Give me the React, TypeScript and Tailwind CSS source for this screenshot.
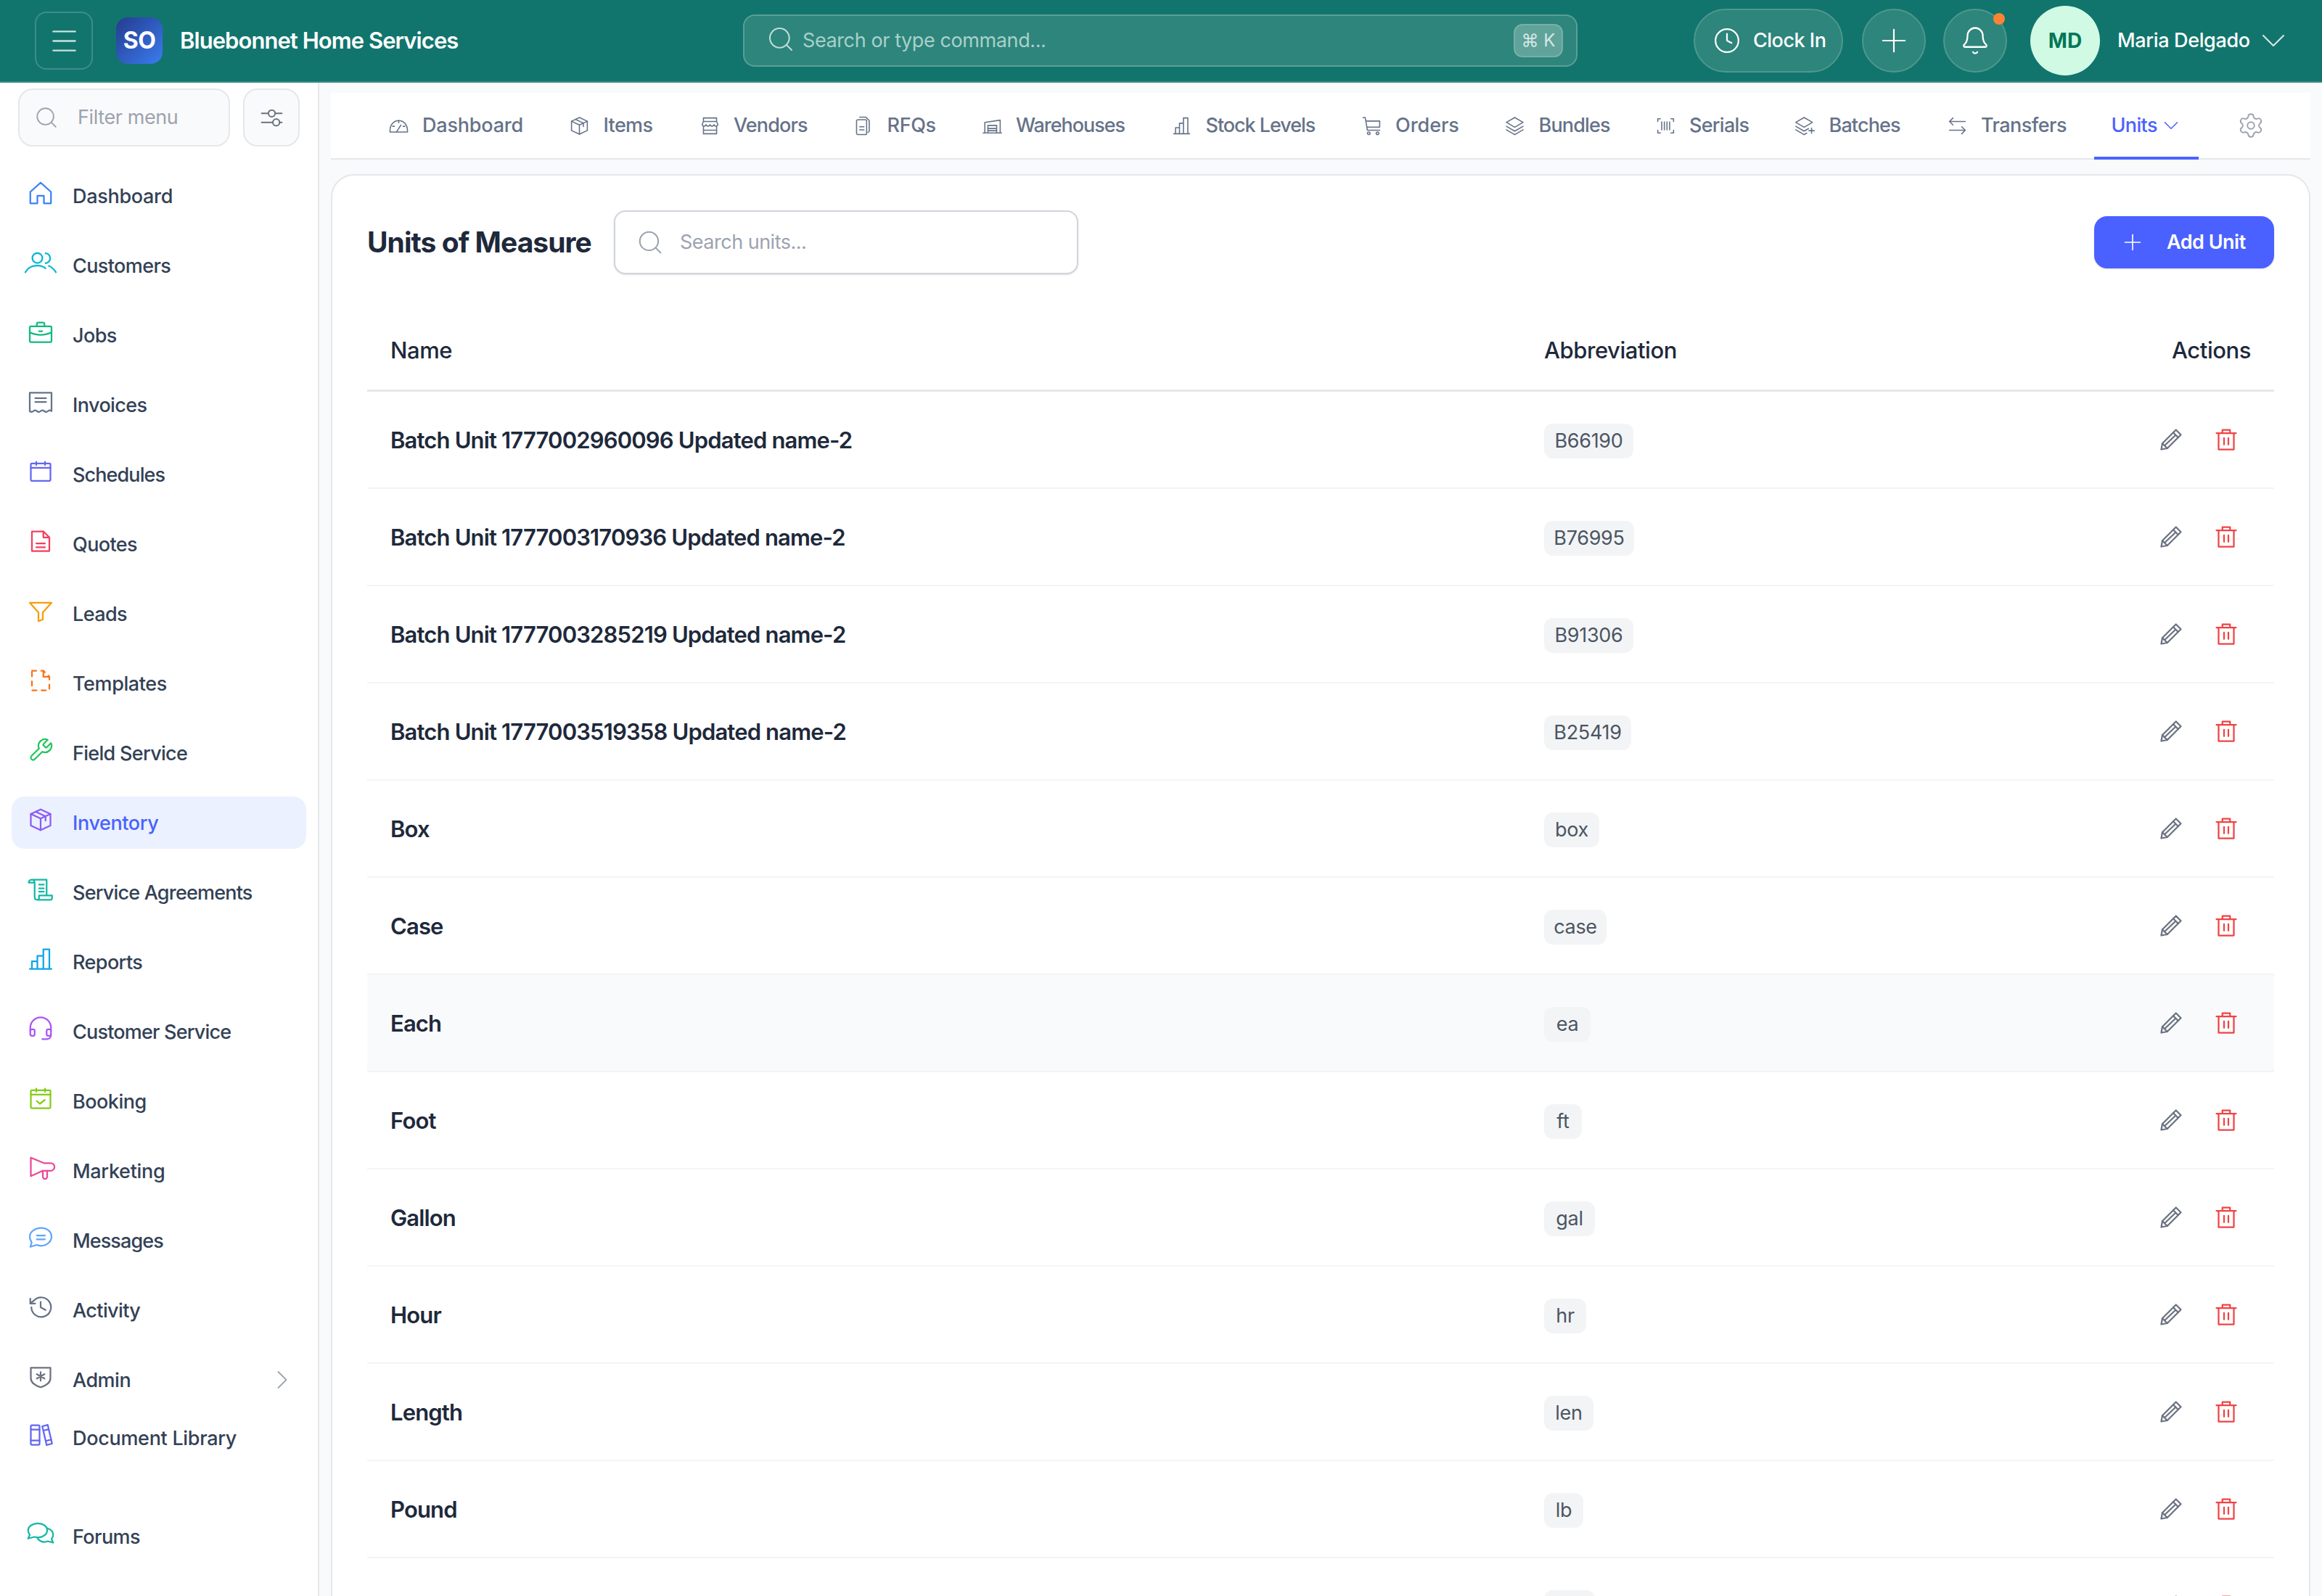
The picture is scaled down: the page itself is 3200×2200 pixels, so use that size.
import React from 'react';
import { Bell, ChevronDown, ChevronRight, Clock, Menu, Plus, Search, Settings } from 'lucide-react';

type IconProps = { className?: string; sw?: number; children: React.ReactNode };

const Ico = ({ className, sw = 1.5, children }: IconProps) => (
  <svg viewBox="0 0 24 24" fill="none" stroke="currentColor" strokeWidth={sw} strokeLinecap="round" strokeLinejoin="round" className={`overflow-visible shrink-0 ${className ?? ''}`}>
    {children}
  </svg>
);

const boxPaths = (
  <>
    <path d="M12 2.500l9 4.200v10.600l-9 4.200-9-4.200V6.700z" />
    <path d="M3 6.700l9 4.200 9-4.200M12 10.900v10.600M7.500 4.600l9 4.200v4" />
  </>
);

const navItems = [
  { label: 'Dashboard', t: 'tracking-[-0.3px]', color: 'text-[#3b82f6]', icon: <path d="M12 2.500L2.500 11v10.500h6.500V14.500h6v7h6.500V11z" /> },
  { label: 'Customers', t: 'tracking-[-0.6px]', color: 'text-[#06b6d4]', icon: <><path d="M9 3.200a4.600 4.600 0 1 0 0 9.200 4.600 4.600 0 0 0 0-9.200z" /><path d="M-2 20.800c2.200-4 6-6 11-6 2.800 0 5.500.8 7.500 2.400" /><path d="M16.500 3.400c2.500.3 4.200 2.200 4.200 4.600s-1.700 4.200-4.200 4.600" /><path d="M19.500 15c2.800.9 4.500 2.800 6.500 5.800" /></> },
  { label: 'Jobs', t: 'tracking-[-0.6px]', color: 'text-[#10b981]', icon: <><rect x="2" y="6.500" width="20" height="14.500" rx="1.200" /><path d="M8.500 6.500V4.500A1.500 1.500 0 0 1 10 3h4a1.500 1.500 0 0 1 1.500 1.500v2" /><path d="M2 12c3 1.600 6.400 2.400 10 2.400s7-.8 10-2.400" /><path d="M10.500 11h3" /></> },
  { label: 'Invoices', t: 'tracking-[-0.6px]', color: 'text-[#64748b]', icon: <><path d="M2 20.500V3.500h20v17q-1.700-1.400-3.300 0t-3.400 0-3.300 0-3.400 0-3.300 0-3.300 0z" /><path d="M7 8.500h10M7 12h10" /></> },
  { label: 'Schedules', t: 'tracking-[-0.9px]', color: 'text-[#6366f1]', icon: <><rect x="3" y="4.500" width="18" height="16" rx="0.800" /><path d="M3 8.500h18M8 3v3M16 3v3" /></> },
  { label: 'Quotes', t: 'tracking-[-0.6px]', color: 'text-[#f43f5e]', icon: <><path d="M4 3h10.500L20 8.500V21H4z" /><path d="M14.500 3v5.500H20M8 14h8M8 17.500h8" /></> },
  { label: 'Leads', t: 'tracking-[-0.6px]', color: 'text-[#f59e0b]', icon: <path d="M2 4.500h20l-8 9v6.500l-4 1.500v-8z" /> },
  { label: 'Templates', t: 'tracking-[-0.4px]', color: 'text-[#f97316]', icon: <><path d="M4 3h10.500L20 8.500V21H4z" strokeDasharray="4 4.500" /><path d="M14.500 3v5.500H20" /></> },
  { label: 'Field Service', t: 'tracking-[-0.7px]', color: 'text-[#22c55e]', icon: <path d="M14.700 6.300a1 1 0 0 0 0 1.400l1.600 1.600a1 1 0 0 0 1.400 0l3.770-3.770a6 6 0 0 1-7.940 7.940l-6.910 6.910a2.120 2.120 0 0 1-3-3l6.910-6.910a6 6 0 0 1 7.940-7.940l-3.760 3.760z" /> },
  { label: 'Inventory', t: 'tracking-[-0.4px]', color: 'text-[#8b5cf6]', active: true, icon: boxPaths },
  { label: 'Service Agreements', t: 'tracking-[-0.8px]', color: 'text-[#14b8a6]', icon: <><path d="M4 3c-1.500 0-3 1-3 2.800h4.500M4 3h13.500v14.500M4 3c1.200 0 2.500 1 2.500 2.800V19c0 1.500 1 2.500 2.500 2.500h12c.8 0 1.500-.6 1.500-1.500v-2.500H10.500V20c0 .9-.7 1.500-1.500 1.500" /><path d="M10.500 7.500h4.500M10.500 11h4.500M10.500 14h4.500" /></> },
  { label: 'Reports', t: 'tracking-[-0.6px]', color: 'text-[#0ea5e9]', icon: <path d="M2 21h20M4 21v-7h5v7M9 21V9h5.500v12M14.500 21V3H20v18" /> },
  { label: 'Customer Service', t: 'tracking-[-0.8px]', color: 'text-[#a855f7]', icon: <><path d="M2.500 14v-3a9.500 9.500 0 0 1 19 0v3" /><rect x="2.500" y="12.500" width="4" height="6" rx="1.500" /><rect x="17.500" y="12.500" width="4" height="6" rx="1.500" /><path d="M21.500 18c0 2-1.500 3.500-3.500 3.500h-4.500" /></> },
  { label: 'Booking', t: 'tracking-[-0.5px]', color: 'text-[#84cc16]', icon: <><rect x="3" y="4.500" width="18" height="16.500" rx="0.800" /><path d="M3 8.500h18M8 3v3M16 3v3M8.500 14.500l2.800 2.500 4.500-3.500" /></> },
  { label: 'Marketing', t: 'tracking-[-0.3px]', color: 'text-[#ec4899]', icon: <><path d="M3 2.500v17l11-5h7a3.500 3.500 0 0 0 .5-7H15z" /><path d="M14 14.500V20a2 2 0 0 0 4 0v-5.500" /></> },
  { label: 'Messages', t: 'tracking-[-0.9px]', color: 'text-[#60a5fa]', icon: <><path d="M12.500 3c5 0 9.500 3.300 9.500 8s-4.500 8.500-9.500 8.500c-1.500 0-3-.3-4.300-.8L2.500 20.500l1.300-4C2.700 15 2 13.200 2 11c0-4.700 5.500-8 10.500-8z" /><path d="M8.500 10h7.500M8.500 13.500h7.500" /></> },
  { label: 'Activity', t: 'tracking-[-0.6px]', color: 'text-[#64748b]', icon: <><path d="M3.500 12a9 9 0 1 0 2.600-6.400L2.500 8.500" /><path d="M2.500 4v4.500H7M12 7v5l4.500 2.500" /></> },
];

const filesIcon = <><rect x="4.500" y="5" width="11.500" height="17" rx="1.500" /><path d="M8 2h7l4 4v11.500c0 1-.6 1.800-1.500 2M8 13h5M8 16.500h5" /></>;

const tabs = [
  { label: 'Dashboard', w: 'w-[139px] tracking-[-0.2px]', icon: <><path d="M2 18c0-7 4-12 10-12s10 5 10 12v1H2z" /><path d="M12 6v2.500M5 12.500h2M19 12.500h-2M9.500 19l5-8" /></> },
  { label: 'Items', w: 'w-[69px] tracking-[-0.65px]', icon: boxPaths },
  { label: 'Vendors', w: 'w-[101px] tracking-[-0.85px]', icon: <><path d="M4.500 3h15v4h-15zM4.500 7L3 10.500a2.300 2.300 0 0 0 4.500 0 2.300 2.300 0 0 0 4.500 0 2.300 2.300 0 0 0 4.500 0 2.300 2.300 0 0 0 4.500 0L19.500 7" /><path d="M4.500 13v8h15v-8M4.500 17h15" /></> },
  { label: 'RFQs', w: 'w-[67px] tracking-[-0.35px]', icon: filesIcon },
  { label: 'Warehouses', w: 'w-[151px] tracking-[-1.05px]', icon: <path d="M1.500 20h21M3.500 20V8L21 5.500V20M7 20v-8.500h10V20M7 15h10M7 17.500h10" /> },
  { label: 'Stock Levels', w: 'w-[151px] tracking-[-1.05px]', icon: <path d="M3 21h18M5 21v-7h4.500v7M9.500 21V9H14v12M14 21V3h5v18" /> },
  { label: 'Orders', w: 'w-[87px] tracking-[-0.05px]', icon: <><path d="M2 2.500h2.500L7 17h14M5 6.500h16v7H6.500" /><circle cx="8.500" cy="20.500" r="1.500" /><circle cx="18.500" cy="20.500" r="1.500" /></> },
  { label: 'Bundles', w: 'w-[97px] tracking-[-0.85px]', icon: <path d="M12 2.500l9.500 5.500-9.500 5.500L2.500 8zM2.500 12.500l9.500 5.500 9.500-5.500M2.500 16.500l9.500 5.500 9.500-5.500" /> },
  { label: 'Serials', w: 'w-[82px] tracking-[-0.75px]', icon: <path d="M6 4H3v3M18 4h3v3M6 20H3v-3M18 20h3v-3M7.500 7.500v9M10.500 7.500v9M13.500 7.500v9M16.500 7.500v9" /> },
  { label: 'Batches', w: 'w-[99px] tracking-[-0.85px]', icon: <path d="M11 2.500l9.500 5.500-9.500 5.500L1.500 8zM1.500 12.500l9.500 5.500 5-2.900M1.500 16.500l9.500 5.500 3-1.700M19.500 14.500v6M16.500 17.500h6" /> },
  { label: 'Transfers', w: 'w-[118px] tracking-[-0.55px]', icon: <path d="M21 7H3M7 3L3 7l4 4M3 17h18M17 13l4 4-4 4" /> },
];

// last row only shows the top of its badge and icons above the fold
const rows = [
  { name: 'Batch Unit 1777002960096 Updated name-2', abbr: 'B66190', w: 'w-[123px]' },
  { name: 'Batch Unit 1777003170936 Updated name-2', abbr: 'B76995', w: 'w-[124px]' },
  { name: 'Batch Unit 1777003285219 Updated name-2', abbr: 'B91306', w: 'w-[123px]' },
  { name: 'Batch Unit 1777003519358 Updated name-2', abbr: 'B25419', w: 'w-[120px]' },
  { name: 'Box', abbr: 'box', w: 'w-[76px]' },
  { name: 'Case', abbr: 'case', w: 'w-[86px]' },
  { name: 'Each', abbr: 'ea', w: 'w-[64px]', hover: true },
  { name: 'Foot', abbr: 'ft', w: 'w-[52px]' },
  { name: 'Gallon', abbr: 'gal', w: 'w-[70px]' },
  { name: 'Hour', abbr: 'hr', w: 'w-[58px]' },
  { name: 'Length', abbr: 'len', w: 'w-[68px]' },
  { name: 'Pound', abbr: 'lb', w: 'w-[54px]' },
  { name: '', abbr: '', w: 'w-[70px]' },
];

const labelClass = 'ml-[26px] translate-y-px text-[27px] font-[550]';

const NavRow = ({ item }: { item: (typeof navItems)[number] }) => (
  <div className={`flex h-[72px] items-center rounded-[18px] pl-[22px] ${item.active ? 'bg-[#ebf1fe] text-[#4a61ff]' : 'text-[#334155]'}`}>
    <Ico className={`h-9 w-9 -translate-y-1 ${item.color}`}>{item.icon}</Ico>
    <span className={`${labelClass} ${item.t}`}>{item.label}</span>
  </div>
);

export default function App() {
  return (
    <div className="flex h-[2200px] w-[3200px] flex-col overflow-hidden bg-[#f9fafb] font-['Inter',sans-serif]">
      <header className="flex h-[114px] shrink-0 items-center border-b-2 border-[#3b8b83] bg-[#11756d]">
        <button className="ml-12 flex h-20 w-20 items-center justify-center rounded-2xl border-2 border-[#3f8d85] text-[#c9e2de]">
          <Menu className="h-[45px] w-[45px]" strokeWidth={1.3} />
        </button>
        <div className="ml-8 flex h-16 w-16 items-center justify-center rounded-2xl bg-linear-to-br from-[#243c8f] to-[#3b7cf0] text-[32px] font-bold tracking-[-0.5px] text-white">SO</div>
        <div className="ml-6 w-[776px] text-[31px] font-semibold tracking-[-0.95px] whitespace-nowrap text-white">Bluebonnet Home Services</div>
        <div className="flex h-[72px] w-[1150px] items-center rounded-2xl border-2 border-[#5a9f97] bg-[#2d857b] pr-[18px] pl-[30px]">
          <Search className="h-10 w-10 -translate-y-0.5 text-[#c0dbd7]" strokeWidth={1.25} />
          <span className="ml-[10px] text-[27px] tracking-[-0.4px] text-[#a9d0cb]">Search or type command...</span>
          <span className="ml-auto flex h-[46px] w-[68px] items-center justify-center rounded-xl border-2 border-[#76b0a9] bg-[#5fa39b] text-[24px] text-[#d5e8e5]">⌘ K</span>
        </div>
        <button className="ml-[160px] flex h-[88px] w-[206px] items-center rounded-full border-2 border-[#4e988f] bg-[#2d857b] pl-[25px] text-white">
          <Clock className="h-[38px] w-[38px]" strokeWidth={1.4} />
          <span className="ml-[17px] text-[27px] font-[550] tracking-[-0.5px]">Clock In</span>
        </button>
        <button className="ml-[26px] flex h-[88px] w-[88px] items-center justify-center rounded-full border-2 border-[#4e988f] bg-[#2d857b] text-white">
          <Plus className="h-[52px] w-[52px]" strokeWidth={1} />
        </button>
        <button className="relative ml-6 flex h-[88px] w-[88px] items-center justify-center rounded-full border-2 border-[#4e988f] bg-[#2d857b] text-white">
          <Bell className="h-[42px] w-[42px]" strokeWidth={1.3} />
          <span className="absolute top-1 right-[1px] h-4 w-4 rounded-full bg-[#fb8332]" />
        </button>
        <div className="ml-8 flex h-24 w-24 items-center justify-center rounded-full bg-[#d1fae5] text-[28px] font-bold text-[#047857]">MD</div>
        <span className="ml-[24px] w-[185px] text-[27px] font-[550] tracking-[-0.35px] whitespace-nowrap text-white">Maria Delgado</span>
        <ChevronDown className="ml-[2px] h-14 w-14 text-[#d5e8e5]" strokeWidth={0.9} />
      </header>

      <div className="flex min-h-0 flex-1">
        <aside className="w-[440px] shrink-0 border-r-2 border-[#e5e7eb] bg-white">
          <div className="mt-2 ml-[25px] flex gap-[18px]">
            <div className="flex h-20 w-[292px] items-center rounded-[20px] border-2 border-[#e5e7eb] bg-[#f9fafb] pl-[20px]">
              <Search className="h-[34px] w-[34px] text-[#9ca3af]" strokeWidth={1.3} />
              <span className="ml-[26px] text-[27px] tracking-[-0.4px] text-[#9ca3af]">Filter menu</span>
            </div>
            <div className="flex h-20 w-[78px] items-center justify-center rounded-[20px] border-2 border-[#e5e7eb] bg-[#f9fafb] text-[#6b7280]">
              <Ico className="h-[37px] w-[37px]" sw={1.3}>
                <path d="M3 8h6M15 8h6M3 16h10M19 16h2" />
                <circle cx="12" cy="8" r="3" />
                <circle cx="16" cy="16" r="3" />
              </Ico>
            </div>
          </div>
          <nav className="mt-8 flex w-[422px] flex-col gap-6 pl-4">
            {navItems.map(item => (
              <NavRow key={item.label} item={item} />
            ))}
          </nav>
          <div className="mt-6 w-[422px] pl-4">
            <div className="flex h-[72px] items-center pl-[22px] text-[#334155]">
              <Ico className="h-9 w-9 -translate-y-1 text-[#6b7280]"><path d="M3 3.500h18V13c0 4-4 7-9 8.500-5-1.500-9-4.500-9-8.500z" /><path d="M12 7.500v8M8.500 9.500l7 4M15.500 9.500l-7 4" /></Ico>
              <span className={`${labelClass} tracking-[-0.5px]`}>Admin</span>
              <ChevronRight className="mr-[11px] ml-auto h-11 w-11 text-[#9ca3af]" strokeWidth={1} />
            </div>
            <div className="mt-2 flex h-[72px] items-center pl-[22px] text-[#334155]">
              <Ico className="h-9 w-9 -translate-y-1 text-[#6366f1]"><rect x="3" y="3" width="8" height="18" rx="1" /><path d="M3 7h8M3 17h8M13.500 4l5-1.300L22.500 20l-5 1.300zM14.500 8l5-1.300M16.800 17.500l5-1.300" /></Ico>
              <span className={`${labelClass} tracking-[-0.3px]`}>Document Library</span>
            </div>
            <div className="mt-16 flex h-[72px] items-center pl-[22px] text-[#334155]">
              <Ico className="h-9 w-9 -translate-y-1 text-[#14b8a6]"><path d="M9.500 2.500c4.500 0 8.500 2.700 8.500 6.500s-4 6.500-8.500 6.500c-1 0-2.200-.2-3.200-.5L.500 16.500l1.500-3.500C1 12 .500 10.500.500 9c0-3.800 4.500-6.500 9-6.500z" /><path d="M18 7c3 1 5.500 3 5.500 6 0 1.500-.5 2.800-1.500 3.800l1.500 3.500-5-1.300c-3.500 1.500-7.500.5-9.500-3" /></Ico>
              <span className={`${labelClass} tracking-[-0.6px]`}>Forums</span>
            </div>
          </div>
        </aside>

        <main className="min-w-0 flex-1 px-4 pt-[14px]">
          <div className="flex h-[92px] items-stretch border-b-2 border-[#e5e7eb] bg-white pl-[53px]">
            {tabs.map(t => (
              <div key={t.label} className="mr-[13.5px] flex items-center px-6 text-[#667289]">
                <Ico className="mr-[18.5px] ml-[1.5px] h-[29px] w-[29px]" sw={1.3}>{t.icon}</Ico>
                <span className={`${t.w} text-[27px] font-[550] whitespace-nowrap`}>{t.label}</span>
              </div>
            ))}
            <div className="relative flex w-[144px] items-center px-6 text-[#4a61ff]">
              <span className="w-[65px] text-[27px] font-[550] tracking-[-0.65px]">Units</span>
              <ChevronDown className="ml-[2px] h-[34px] w-[34px] shrink-0" strokeWidth={1.1} />
              <span className="absolute inset-x-0 -bottom-0.5 h-1 bg-[#4a61ff]" />
            </div>
            <div className="ml-[53px] flex items-center text-[#9ca3af]">
              <Settings className="h-[38px] w-[38px]" strokeWidth={1.2} />
            </div>
          </div>

          <section className="mt-5 h-[2100px] rounded-t-[32px] border-2 border-[#e5e7eb] bg-white p-12">
            <div className="flex items-center">
              <h1 className="w-[307px] text-[39px] font-bold tracking-[-0.95px] whitespace-nowrap text-[#1e293b]">Units of Measure</h1>
              <div className="ml-[33px] flex h-[88px] w-[640px] items-center rounded-2xl border-2 border-[#d1d5db] bg-white pl-[29px] shadow-sm">
                <Search className="h-[38px] w-[38px] text-[#9ca3af]" strokeWidth={1.3} />
                <span className="ml-[22px] text-[27px] tracking-[-0.5px] text-[#9ca3af]">Search units...</span>
              </div>
              <button className="ml-auto flex h-[72px] w-[248px] items-center rounded-[18px] bg-[#4a61ff] pl-[35px] text-white shadow-sm">
                <Plus className="h-9 w-9" strokeWidth={1.1} />
                <span className="ml-[29px] text-[27px] font-semibold tracking-[-0.5px]">Add Unit</span>
              </button>
            </div>

            <div className="mt-12 flex h-[114px] items-center border-b-[3px] border-[#e5e7eb] pt-1 pl-8 text-[31px] font-[550] tracking-[-0.45px] text-[#1e293b]">
              <span className="w-[1590px]">Name</span>
              <span>Abbreviation</span>
              <span className="mr-8 ml-auto">Actions</span>
            </div>
            {rows.map((r, i) => (
              <div key={i} className={`flex h-[134px] items-center border-b-2 border-[#f3f4f6] pl-8 ${r.hover ? 'bg-[#f9fafb]' : ''}`}>
                <span className="w-[1590px] translate-y-px text-[31px] font-semibold tracking-[-0.85px] text-[#1e293b]">{r.name}</span>
                <span className={`flex h-12 ${r.w} translate-y-0.5 items-center justify-center rounded-xl bg-[#f3f4f6] text-[27px] tracking-[-0.3px] text-[#4b5563]`}>{r.abbr}</span>
                <div className="mr-12 ml-auto flex gap-10">
                  <Ico className="h-9 w-9 text-[#6b7280]">
                    <path d="M16.500 3l4.500 4.500L8.500 20 3 21l1-5.500z" />
                    <path d="M14 5.500l4.500 4.500M6 17.500L16 8M4 15.500l4.500 4.500" />
                  </Ico>
                  <Ico className="h-9 w-9 text-[#ef4444]">
                    <path d="M3 6h18M8.500 6V3h7v3M5 6v15h14V6M10 10.500v6M14 10.500v6" />
                  </Ico>
                </div>
              </div>
            ))}
          </section>
        </main>
      </div>
    </div>
  );
}
